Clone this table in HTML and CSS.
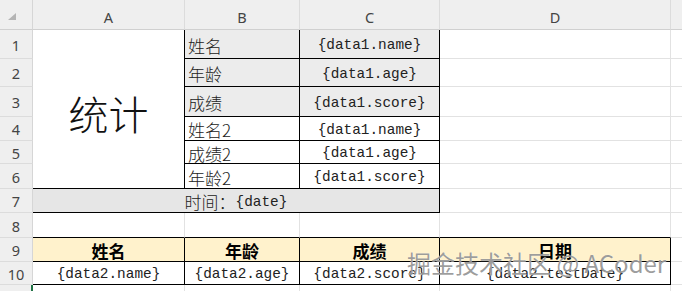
FILE: index.html
```html
<!DOCTYPE html>
<html lang="zh">
<head>
<meta charset="utf-8">
<title>Sheet</title>
<link rel="stylesheet" href="styles.css">
</head>
<body>
<div class="sheet">
  <div class="corner"><svg width="10" height="8" viewBox="0 0 10 8"><polygon points="9,0 9,7 1,7" fill="#b4b4b4"/></svg></div>
  <div class="ch">A</div>
  <div class="ch">B</div>
  <div class="ch">C</div>
  <div class="ch">D</div>
  <div class="ch ch-last"></div>

  <div class="rh">1</div>
  <div class="c title">统计</div>
  <div class="c gray bk-r bk-b label"><span class="cjk">姓名</span></div>
  <div class="c gray bk-r bk-b mid"><span class="mono">{data1.name}</span></div>
  <div class="c"></div>
  <div class="c e"></div>

  <div class="rh">2</div>
  <div class="c gray bk-r bk-b label"><span class="cjk">年龄</span></div>
  <div class="c gray bk-r bk-b mid"><span class="mono">{data1.age}</span></div>
  <div class="c"></div>
  <div class="c e"></div>

  <div class="rh">3</div>
  <div class="c gray bk-r bk-b label"><span class="cjk">成绩</span></div>
  <div class="c gray bk-r bk-b mid"><span class="mono">{data1.score}</span></div>
  <div class="c"></div>
  <div class="c e"></div>

  <div class="rh">4</div>
  <div class="c bk-r bk-b label"><span class="cjk">姓名2</span></div>
  <div class="c bk-r bk-b mid"><span class="mono">{data1.name}</span></div>
  <div class="c"></div>
  <div class="c e"></div>

  <div class="rh">5</div>
  <div class="c bk-r bk-b label"><span class="cjk">成绩2</span></div>
  <div class="c bk-r bk-b mid"><span class="mono">{data1.age}</span></div>
  <div class="c"></div>
  <div class="c e"></div>

  <div class="rh">6</div>
  <div class="c bk-r bk-b label"><span class="cjk">年龄2</span></div>
  <div class="c bk-r bk-b mid"><span class="mono">{data1.score}</span></div>
  <div class="c"></div>
  <div class="c e"></div>

  <div class="rh">7</div>
  <div class="c span3 gray2 bk-r bk-b mid"><span class="cjk">时间：</span><span class="mono">{date}</span></div>
  <div class="c"></div>
  <div class="c e"></div>

  <div class="rh">8</div>
  <div class="c bk-b"></div>
  <div class="c bk-b"></div>
  <div class="c bk-b"></div>
  <div class="c bk-b"></div>
  <div class="c e"></div>

  <div class="rh">9</div>
  <div class="c yellow bk-r bk-b mid"><span class="cjk bold">姓名</span></div>
  <div class="c yellow bk-r bk-b mid"><span class="cjk bold">年龄</span></div>
  <div class="c yellow bk-r bk-b mid"><span class="cjk bold">成绩</span></div>
  <div class="c yellow bk-r bk-b mid"><span class="cjk bold">日期</span></div>
  <div class="c e"></div>

  <div class="rh">10</div>
  <div class="c bk-r bk-b mid"><span class="mono">{data2.name}</span></div>
  <div class="c bk-r bk-b mid"><span class="mono">{data2.age}</span></div>
  <div class="c bk-r bk-b mid"><span class="mono">{data2.score}</span></div>
  <div class="c bk-r bk-b mid"><span class="mono">{data2.testDate}</span></div>
  <div class="c e"></div>

  <div class="rh rh-active"></div>
  <div class="c"></div>
  <div class="c"></div>
  <div class="c"></div>
  <div class="c"></div>
  <div class="c e"></div>

  <div class="watermark">掘金技术社区 @ ACoder</div>
</div>
</body>
</html>
```

FILE: styles.css
```css
html, body {
  margin: 0;
  padding: 0;
  background: #ffffff;
  overflow: hidden;
}

.sheet {
  position: relative;
  width: 682px;
  height: 291px;
  overflow: hidden;
  display: grid;
  grid-template-columns: 33px 152px 115px 140px 231px 11px;
  grid-template-rows: 30px 29px 28px 30px 24px 23px 25px 24px 25px 24px 23px 30px;
  font-family: "Liberation Mono", "Noto Sans CJK SC", monospace;
  color: #1a1a1a;
}

.sheet > div {
  box-sizing: border-box;
  min-width: 0;
}

.corner,
.ch,
.rh {
  background: #efefef;
  color: #444444;
  font-family: "Noto Sans", "Open Sans", sans-serif;
  font-size: 14.5px;
  display: flex;
  align-items: center;
  justify-content: center;
}

.corner {
  border-right: 1px solid #d6d6d6;
  border-bottom: 1px solid #d0d0d0;
  align-items: flex-start;
  justify-content: flex-start;
  padding: 13px 0 0 7px;
}

.ch {
  border-right: 1px solid #dcdcdc;
  border-bottom: 1px solid #d0d0d0;
  padding-top: 4px;
}

.ch-last {
  border-right: none;
}

.rh {
  border-right: 1px solid #d6d6d6;
  border-bottom: 1px solid #dcdcdc;
  padding-top: 1px;
}

.rh-active {
  border-right: 2px solid #217346;
}

.c {
  border-right: 1px solid #e2e2e2;
  border-bottom: 1px solid #e2e2e2;
  display: flex;
  align-items: center;
  white-space: nowrap;
  overflow: hidden;
  background: #ffffff;
}

.c.e {
  border-right: none;
}

.bk-r {
  border-right-color: #000000;
}

.bk-b {
  border-bottom-color: #000000;
}

.gray {
  background: #ececec;
}

.gray2 {
  background: #e6e6e6;
}

.yellow {
  background: #fff2cc;
}

.title {
  grid-row: 2 / span 6;
  grid-column: 2;
  border-right-color: #000000;
  border-bottom-color: #000000;
  justify-content: center;
  padding-top: 8px;
  font-family: "Noto Sans CJK SC", sans-serif;
  font-size: 40px;
  font-weight: 300;
  color: #111111;
}

.span3 {
  grid-column: 2 / span 3;
}

.label {
  padding-left: 3px;
  padding-top: 2px;
}

.mid {
  justify-content: center;
  padding-top: 2px;
}

.cjk {
  font-family: "Noto Sans CJK SC", sans-serif;
  font-size: 17px;
  font-weight: 300;
  color: #222222;
}

.cjk.bold {
  font-weight: 700;
  color: #000000;
}

.mono {
  font-family: "Liberation Mono", monospace;
  font-size: 14.4px;
  color: #222222;
}

.watermark {
  position: absolute;
  left: 407px;
  top: 248px;
  font-family: "Noto Sans CJK SC", sans-serif;
  font-size: 24px;
  line-height: 30px;
  color: rgba(120, 120, 120, 0.72);
  text-shadow: 0 0 1px rgba(255, 255, 255, 0.9);
  white-space: nowrap;
  pointer-events: none;
}
```
